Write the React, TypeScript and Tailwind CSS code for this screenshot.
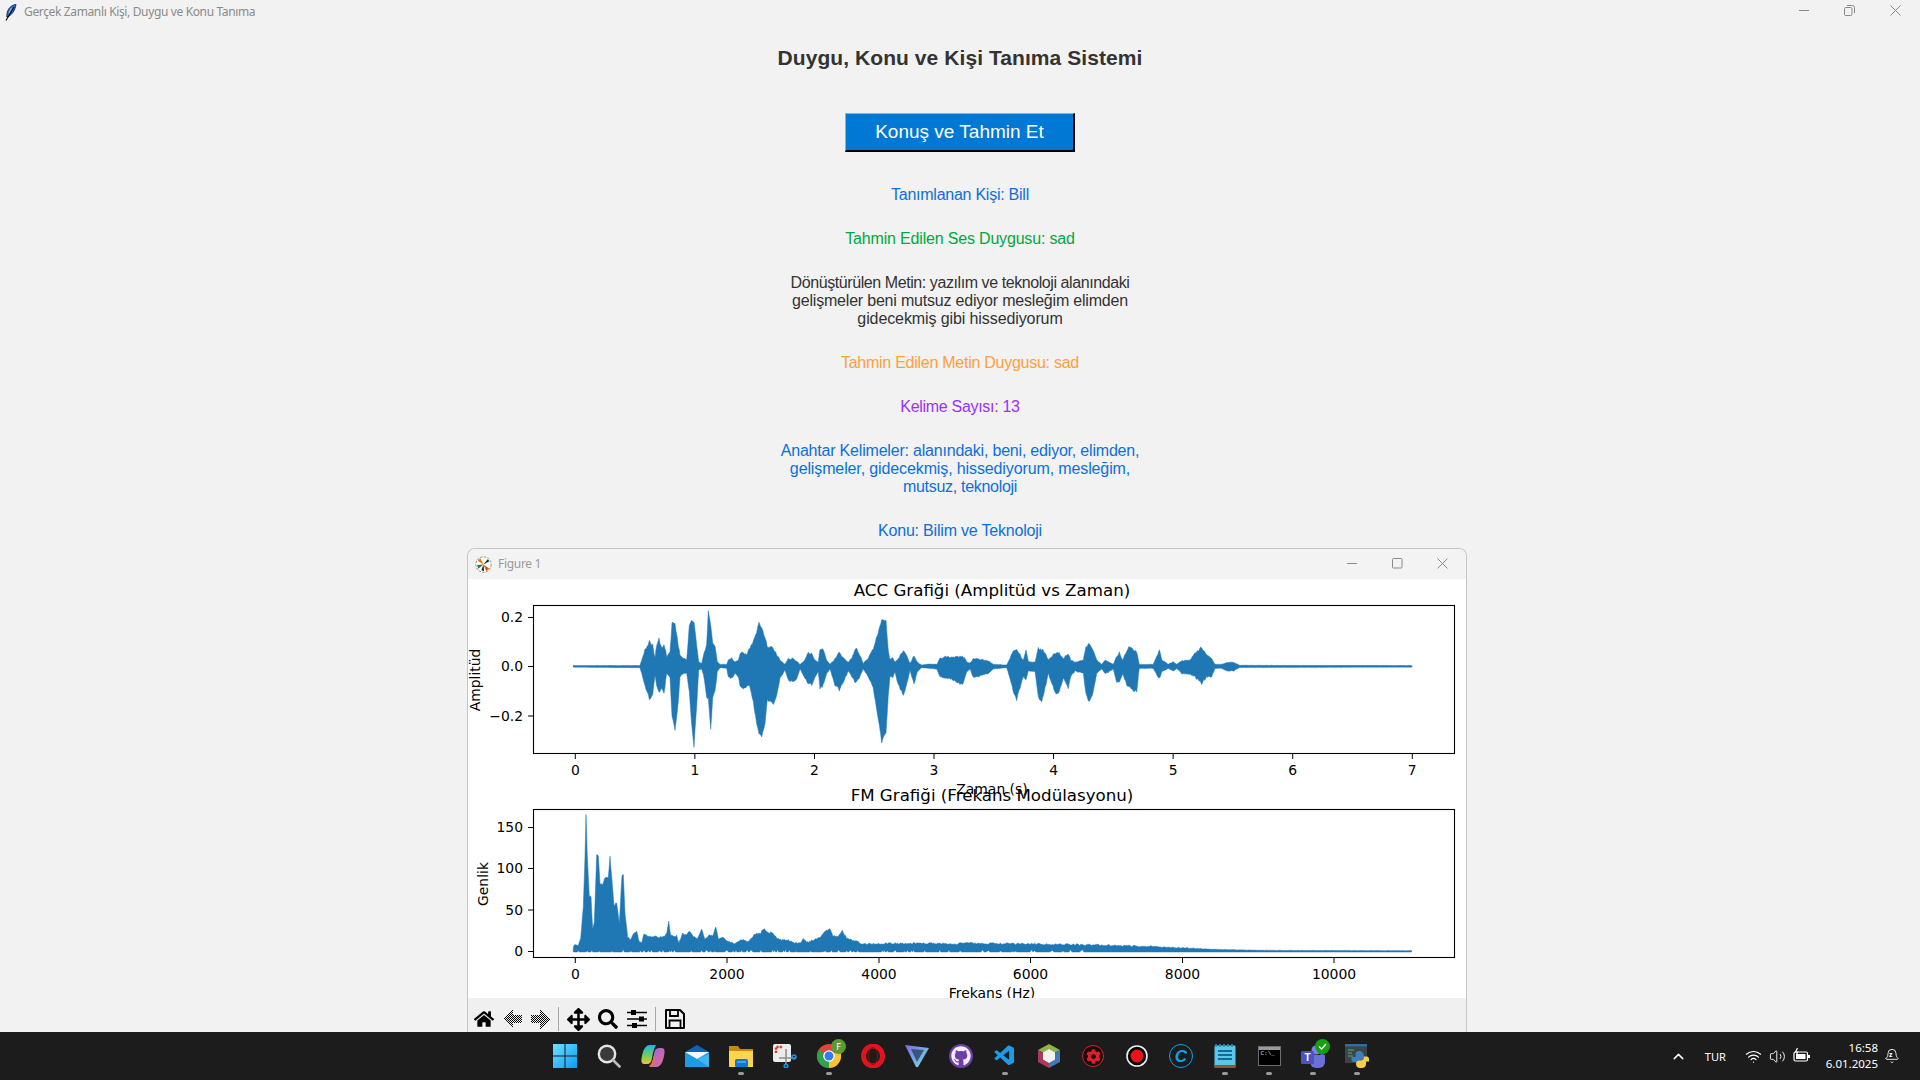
import { Bell, ChevronUp, Volume2, Wifi } from 'lucide-react';
import { FaArrowsAlt, FaCog, FaGithub, FaHome, FaSearch } from 'react-icons/fa';
import { VscVscode } from 'react-icons/vsc';

// envelope read off the reference, [x, top, bottom] in 3x crop units
const waveLeft: number[][] = [
  [340, 362, 366], [540, 362, 368], [545, 345, 385], [555, 315, 420], [568, 290, 462], [578, 300, 450], [585, 340, 390],
  [590, 300, 420], [597, 283, 440], [605, 310, 430], [612, 295, 445], [620, 335, 385], [630, 320, 400], [636, 235, 510],
  [645, 235, 557], [655, 300, 470], [660, 330, 395], [672, 340, 385], [680, 345, 385], [688, 240, 440], [695, 228, 540],
  [702, 230, 605], [710, 300, 480], [716, 350, 375], [725, 355, 372], [733, 320, 400], [740, 300, 460], [745, 198, 460],
  [752, 240, 553], [758, 295, 460], [765, 305, 440], [772, 350, 380], [780, 358, 368], [800, 358, 370], [805, 345, 395],
  [815, 340, 400], [825, 350, 385], [835, 345, 395], [840, 325, 420], [850, 322, 428], [860, 330, 425], [868, 310, 420],
  [880, 290, 470], [890, 260, 540], [897, 228, 565], [905, 250, 572], [915, 275, 540], [922, 310, 460], [930, 305, 470],
  [940, 310, 478], [950, 330, 450], [960, 345, 400], [975, 358, 375], [985, 342, 405], [1000, 340, 412], [1010, 350, 400],
  [1020, 358, 372], [1035, 345, 400], [1045, 322, 415], [1055, 325, 420], [1065, 345, 395], [1075, 352, 380], [1080, 310, 430],
  [1090, 312, 420], [1100, 345, 385], [1110, 358, 372], [1125, 340, 420], [1138, 322, 435], [1150, 340, 410], [1165, 352, 378],
  [1175, 340, 395], [1187, 308, 412], [1200, 330, 395], [1210, 355, 372], [1225, 340, 395], [1240, 310, 430], [1255, 260, 520],
  [1265, 225, 590], [1278, 228, 560], [1285, 320, 450], [1290, 345, 395], [1298, 338, 400], [1305, 350, 380], [1315, 340, 420],
  [1330, 318, 450], [1340, 330, 420], [1350, 355, 375], [1362, 332, 418], [1372, 352, 380], [1385, 360, 368], [1410, 357, 370],
  [1430, 358, 372], [1440, 340, 395], [1460, 335, 400], [1480, 335, 405],
];

const waveRight: number[][] = [
  [0, 335, 418], [10, 335, 415], [20, 350, 380], [30, 355, 372], [40, 342, 398], [60, 343, 392], [85, 348, 385], [100, 358, 372],
  [140, 360, 368], [150, 340, 400], [160, 318, 440], [170, 315, 463], [180, 330, 430], [190, 345, 395], [198, 318, 405],
  [205, 350, 378], [225, 352, 380], [235, 308, 455], [245, 315, 470], [255, 320, 430], [265, 345, 385], [285, 325, 440],
  [295, 322, 447], [310, 340, 400], [325, 325, 430], [332, 345, 395], [345, 352, 378], [370, 345, 385], [378, 305, 450],
  [388, 298, 472], [400, 320, 440], [410, 345, 385], [425, 358, 372], [435, 345, 385], [445, 350, 382], [460, 358, 372],
  [470, 335, 410], [478, 323, 415], [488, 345, 385], [500, 315, 420], [510, 303, 425], [520, 318, 435], [530, 320, 438],
  [538, 358, 370], [580, 358, 370], [590, 335, 390], [598, 315, 400], [606, 345, 380], [625, 358, 370], [640, 350, 378],
  [650, 358, 370], [665, 348, 385], [690, 345, 388], [705, 325, 395], [725, 308, 415], [740, 330, 395], [755, 342, 395],
  [765, 358, 370], [785, 358, 370], [800, 352, 378], [820, 352, 378], [840, 361, 367], [1357, 362, 366],
];

const fmTop: number[][] = [
  [340, 470], [345, 465], [355, 468], [362, 445], [370, 350], [375, 200], [378, 75], [382, 200], [388, 318], [393, 318], [398, 420],
  [403, 398], [410, 195], [415, 195], [420, 282], [428, 282], [434, 265], [438, 262], [445, 260], [450, 200], [455, 260], [462, 345],
  [470, 338], [478, 400], [486, 255], [490, 255], [495, 370], [503, 440], [510, 450], [518, 435], [530, 423], [538, 455], [545, 460],
  [552, 432], [565, 440], [580, 438], [600, 442], [612, 440], [620, 430], [626, 395], [632, 435], [640, 440], [650, 438], [657, 458],
  [668, 430], [678, 435], [688, 422], [700, 440], [712, 445], [725, 417], [735, 450], [748, 435], [758, 437], [767, 412], [775, 445],
  [790, 443], [805, 455], [825, 460], [848, 448], [865, 455], [885, 432], [900, 430], [912, 415], [925, 430], [935, 427], [950, 445],
  [965, 450], [985, 450], [1000, 458], [1020, 460], [1030, 445], [1040, 458], [1060, 450], [1080, 443], [1095, 425], [1108, 415],
  [1120, 438], [1135, 438], [1147, 422], [1160, 445], [1190, 453], [1200, 462], [1230, 463], [1300, 460], [1400, 460], [1500, 462],
];

// small repeatable noise, -0.5..0.5, so the outline does not look ruler-drawn
const noise = (i: number) => {
  const v = Math.sin(i * 12.9898) * 43758.5453;
  return v - Math.floor(v) - 0.5;
};

const wavePath = () => {
  const pts = [
    ...waveLeft.map(([x, t, b]) => [460 + x / 3, 545 + t / 3, 545 + b / 3]),
    ...waveRight.map(([x, t, b]) => [960 + x / 3, 545 + t / 3, 545 + b / 3]),
  ];
  const top: string[] = [];
  const bottom: string[] = [];
  let k = 0;
  for (let i = 0; i < pts.length - 1; i++) {
    const [x0, t0, b0] = pts[i];
    const [x1, t1, b1] = pts[i + 1];
    const steps = Math.max(1, Math.round(x1 - x0));
    for (let s = 0; s < steps; s++) {
      const f = s / steps;
      const x = x0 + (x1 - x0) * f;
      const t = t0 + (t1 - t0) * f;
      const b = b0 + (b1 - b0) * f;
      // thin stretches stay flat, loud ones get a rough edge
      const amp = Math.min(3, (b - t) / 12);
      top.push(`${x.toFixed(1)},${(t + noise(k++) * amp).toFixed(1)}`);
      bottom.push(`${x.toFixed(1)},${(b + noise(k++) * amp).toFixed(1)}`);
    }
  }
  return `M${top.join(' L')} L${bottom.reverse().join(' L')} Z`;
};

const fmPath = () => {
  const top: string[] = [];
  const bottom: string[] = [];
  let k = 1000;
  const add = (x: number, y: number, rough: number) => {
    top.push(`${x.toFixed(1)},${(y + noise(k++) * rough).toFixed(1)}`);
    const notch = x < 1100 && noise(k++) > 0.3 ? 1.5 + noise(k++) * 2 : 0;
    bottom.push(`${x.toFixed(1)},${(952 - notch).toFixed(1)}`);
  };
  for (let i = 0; i < fmTop.length - 1; i++) {
    const x0 = 460 + fmTop[i][0] / 3;
    const y0 = 790 + fmTop[i][1] / 3;
    const x1 = 460 + fmTop[i + 1][0] / 3;
    const y1 = 790 + fmTop[i + 1][1] / 3;
    const steps = Math.max(1, Math.round(x1 - x0));
    for (let s = 0; s < steps; s++) add(x0 + ((x1 - x0) * s) / steps, y0 + ((y1 - y0) * s) / steps, 1.6);
  }
  // long tail past the crop, falling off towards 9 kHz
  const tail: number[][] = [[960, 8.5], [1030, 7.5], [1100, 6.5], [1150, 5], [1183, 3.5], [1220, 2], [1260, 1.2], [1412, 0.8]];
  for (let i = 0; i < tail.length - 1; i++) {
    const [x0, h0] = tail[i];
    const [x1, h1] = tail[i + 1];
    for (let x = x0; x < x1; x += 1.5) {
      const h = h0 + ((h1 - h0) * (x - x0)) / (x1 - x0);
      add(x, 951.5 - h, h > 3 ? 1.8 : 0.3);
    }
  }
  return `M${top.join(' L')} L${bottom.reverse().join(' L')} Z`;
};

const xTicksAcc = [0, 1, 2, 3, 4, 5, 6, 7].map((n) => ({ x: 575.3 + 119.57 * n, label: String(n) }));
const xTicksFm = [
  { x: 575.3, label: '0' },
  { x: 727, label: '2000' },
  { x: 879, label: '4000' },
  { x: 1030.5, label: '6000' },
  { x: 1182.5, label: '8000' },
  { x: 1334, label: '10000' },
];
const yTicksAcc = [
  { y: 617.5, label: '0.2' },
  { y: 666.5, label: '0.0' },
  { y: 716, label: '\u22120.2' },
];
const yTicksFm = [
  { y: 827.5, label: '150' },
  { y: 868.5, label: '100' },
  { y: 910, label: '50' },
  { y: 951.5, label: '0' },
];

const Axes = ({
  top,
  xTicks,
  yTicks,
}: {
  top: number;
  xTicks: { x: number; label: string }[];
  yTicks: { y: number; label: string }[];
}) => (
  <g>
    <rect x={533.5} y={top + 0.5} width={921} height={148} fill="none" stroke="#000" strokeWidth={1.1} />
    {xTicks.map((t) => (
      <g key={t.label}>
        <line x1={t.x} x2={t.x} y1={top + 149} y2={top + 154} stroke="#000" strokeWidth={1} />
        <text x={t.x} y={top + 170} textAnchor="middle" fontSize={13.9}>
          {t.label}
        </text>
      </g>
    ))}
    {yTicks.map((t) => (
      <g key={t.label}>
        <line x1={528} x2={533} y1={t.y} y2={t.y} stroke="#000" strokeWidth={1} />
        <text x={523} y={t.y + 4.5} textAnchor="end" fontSize={13.9}>
          {t.label}
        </text>
      </g>
    ))}
  </g>
);

const FigureCanvas = () => (
  <svg
    viewBox="468 579 998 419"
    width={998}
    height={419}
    className="block"
    fontFamily="'DejaVu Sans', sans-serif"
    fill="#000"
  >
    <Axes top={605} xTicks={xTicksAcc} yTicks={yTicksAcc} />
    <Axes top={809} xTicks={xTicksFm} yTicks={yTicksFm} />
    <line x1={573.5} x2={1412.3} y1={666.5} y2={666.5} stroke="#1f77b4" strokeWidth={1.6} />
    <path d={wavePath()} fill="#1f77b4" stroke="#1f77b4" strokeWidth={0.5} strokeLinejoin="round" />
    <path d={fmPath()} fill="#1f77b4" stroke="#1f77b4" strokeWidth={0.5} strokeLinejoin="round" />
    <text x={992} y={596} textAnchor="middle" fontSize={16.67}>
      ACC Grafiği (Amplitüd vs Zaman)
    </text>
    <text x={992} y={794} textAnchor="middle" fontSize={13.9}>
      Zaman (s)
    </text>
    <text x={992} y={801} textAnchor="middle" fontSize={16.67}>
      FM Grafiği (Frekans Modülasyonu)
    </text>
    <text x={992} y={998} textAnchor="middle" fontSize={13.9}>
      Frekans (Hz)
    </text>
    <text transform="translate(480 680) rotate(-90)" textAnchor="middle" fontSize={13.9}>
      Amplitüd
    </text>
    <text transform="translate(488 884) rotate(-90)" textAnchor="middle" fontSize={13.9}>
      Genlik
    </text>
  </svg>
);

const DitherArrow = ({ dir }: { dir: 'left' | 'right' }) => {
  const id = `dither-${dir}`;
  return (
    <svg width={19} height={20} viewBox="0 0 19 20" shapeRendering="crispEdges">
      <defs>
        <pattern id={id} width={2} height={2} patternUnits="userSpaceOnUse">
          <rect width={1} height={1} fill="#000" />
          <rect x={1} y={1} width={1} height={1} fill="#000" />
        </pattern>
      </defs>
      <path
        d={dir === 'left' ? 'M0 10 L10 0 L10 6 L19 6 L19 14 L10 14 L10 20 Z' : 'M19 10 L9 0 L9 6 L0 6 L0 14 L9 14 L9 20 Z'}
        fill={`url(#${id})`}
      />
    </svg>
  );
};

const SlidersIcon = () => (
  <svg width={20} height={20} viewBox="0 0 20 20">
    <path d="M0 3.5 H20 M0 10 H20 M0 16.5 H20" stroke="#000" strokeWidth={1.6} />
    <rect x={4} y={1} width={5} height={5} fill="#000" />
    <rect x={12} y={7.5} width={5} height={5} fill="#000" />
    <rect x={5} y={14} width={5} height={5} fill="#000" />
  </svg>
);

const SaveIcon = () => (
  <svg width={20} height={20} viewBox="0 0 20 20">
    <path d="M1 1 H15 L19 5 V19 H1 Z" fill="none" stroke="#000" strokeWidth={2} strokeLinejoin="round" />
    <path d="M5 1.5 V7 H13 V1.5" fill="none" stroke="#000" strokeWidth={1.8} />
    <path d="M4.5 18.5 V11.5 H15.5 V18.5" fill="none" stroke="#000" strokeWidth={1.8} />
  </svg>
);

const ToolCell = ({ className, children }: { className?: string; children: React.ReactNode }) => (
  <div className={`flex h-[24px] w-[28px] items-center justify-center ${className ?? ''}`}>{children}</div>
);

const Toolbar = () => (
  <div className="flex h-[34px] items-start bg-[#f0f0f0] pl-[2px] pt-[9px]">
    <ToolCell>
      <FaHome size={20} color="#000" />
    </ToolCell>
    <ToolCell>
      <DitherArrow dir="left" />
    </ToolCell>
    <ToolCell>
      <DitherArrow dir="right" />
    </ToolCell>
    <div className="ml-[4px] h-[24px] w-px bg-[#a8a8a8]" />
    <ToolCell className="ml-[5px]">
      <FaArrowsAlt size={23} color="#000" />
    </ToolCell>
    <ToolCell className="ml-[2px]">
      <FaSearch size={20} color="#000" />
    </ToolCell>
    <ToolCell className="ml-px">
      <SlidersIcon />
    </ToolCell>
    <div className="ml-[4px] h-[24px] w-px bg-[#a8a8a8]" />
    <ToolCell className="ml-[5px]">
      <SaveIcon />
    </ToolCell>
  </div>
);

const MplIcon = () => (
  <svg width={17} height={17} viewBox="0 0 16 16">
    <circle cx={8} cy={8} r={7.2} fill="#fff" stroke="#777" strokeWidth={0.8} strokeDasharray="2.2 1.2" />
    <path d="M8 8 L2.5 4.5 L5 2 Z" fill="#f07800" />
    <path d="M8 8 L13.5 12 L10.5 14 Z" fill="#e05a00" />
    <path d="M8 8 L2 8.5 L3 12 Z" fill="#2c7a3a" />
    <path d="M8 8 L12 3 L13.5 5 Z" fill="#222" />
    <path d="M8 8 L8.5 14 L6 13.5 Z" fill="#222" />
  </svg>
);

const Feather = () => (
  <svg width={12} height={17} viewBox="0 0 12 17">
    <path d="M11 0.5 C6 1 2.5 5 2 10 L1.8 13 C6 12 10 7 11 0.5 Z" fill="#2f6fd0" stroke="#12264d" strokeWidth={0.9} />
    <path d="M6.5 4 L4 9" stroke="#9cc4f2" strokeWidth={1} fill="none" />
    <path d="M9 3 L1 16.5" stroke="#000" strokeWidth={1.1} fill="none" />
  </svg>
);

const WinButtons = ({ restore, className }: { restore?: boolean; className: string }) => (
  <div className={`absolute flex items-center ${className}`}>
    <svg width={11} height={11} viewBox="0 0 11 11" className="mr-[34px]">
      <line x1={0} x2={10} y1={5.5} y2={5.5} stroke="#8a8a8a" />
    </svg>
    {restore ? (
      <svg width={11} height={11} viewBox="0 0 11 11" className="mr-[35px]">
        <rect x={0.5} y={2.5} width={7.5} height={8} rx={1.2} fill="none" stroke="#8a8a8a" />
        <path d="M3 0.5 H8.5 A2 2 0 0 1 10.5 2.5 V8" fill="none" stroke="#8a8a8a" />
      </svg>
    ) : (
      <svg width={11} height={11} viewBox="0 0 11 11" className="mr-[34px]">
        <rect x={0.5} y={0.5} width={9.5} height={9.5} rx={1} fill="none" stroke="#8a8a8a" />
      </svg>
    )}
    <svg width={11} height={11} viewBox="0 0 11 11">
      <path d="M0.5 0.5 L10.5 10.5 M10.5 0.5 L0.5 10.5" stroke="#8a8a8a" fill="none" />
    </svg>
  </div>
);

const Dot = () => <span className="absolute bottom-[5px] left-1/2 h-[3px] w-[6px] -translate-x-1/2 rounded-full bg-[#9b9b9b]" />;

const TaskIcon = ({ running, children }: { running?: boolean; children: React.ReactNode }) => (
  <div className="relative flex h-[48px] w-[44px] items-center justify-center">
    {children}
    {running && <Dot />}
  </div>
);

const taskIcons: { key: string; running?: boolean; node: React.ReactNode }[] = [
  {
    key: 'start',
    node: (
      <svg width={24} height={24} viewBox="0 0 24 24">
        <defs>
          <linearGradient id="win" x1="0" y1="0" x2="1" y2="1">
            <stop offset="0" stopColor="#6fe0ff" />
            <stop offset="1" stopColor="#0a9bf5" />
          </linearGradient>
        </defs>
        <path d="M0 0 H11.5 V11.5 H0 Z M12.5 0 H24 V11.5 H12.5 Z M0 12.5 H11.5 V24 H0 Z M12.5 12.5 H24 V24 H12.5 Z" fill="url(#win)" />
      </svg>
    ),
  },
  {
    key: 'search',
    node: (
      <svg width={24} height={24} viewBox="0 0 24 24">
        <circle cx={10} cy={10} r={8.2} fill="#3a3a3a" stroke="#e4e4e4" strokeWidth={2.4} />
        <line x1={16} y1={16} x2={22.5} y2={22.5} stroke="#bdbdbd" strokeWidth={2.6} strokeLinecap="round" />
      </svg>
    ),
  },
  {
    key: 'copilot',
    node: (
      <svg width={24} height={24} viewBox="0 0 24 24">
        <defs>
          <linearGradient id="cpA" x1="0" y1="0" x2="0" y2="1">
            <stop offset="0" stopColor="#1fb6e8" />
            <stop offset="0.55" stopColor="#6bcf5a" />
            <stop offset="1" stopColor="#f6c33a" />
          </linearGradient>
          <linearGradient id="cpB" x1="0" y1="0" x2="1" y2="1">
            <stop offset="0" stopColor="#8f6be8" />
            <stop offset="1" stopColor="#f0668c" />
          </linearGradient>
        </defs>
        <path d="M9 1 H15 C13 4 12 9 11 14 C10.5 18 9 20 6 20 H3 C0 20 0 16 1 12 C2 7 4 1 9 1 Z" fill="url(#cpA)" />
        <path d="M15 23 H9 C11 20 12 15 13 10 C13.5 6 15 4 18 4 H21 C24 4 24 8 23 12 C22 17 20 23 15 23 Z" fill="url(#cpB)" />
        <path d="M8 22 C11 20 12 16 12.6 12 L14 14 C13.5 18 12 22 9 23 Z" fill="#f2762e" />
      </svg>
    ),
  },
  {
    key: 'mail',
    node: (
      <svg width={24} height={24} viewBox="0 0 24 24">
        <path d="M12 1 L24 8 V10 H0 V8 Z" fill="#0c64b8" />
        <path d="M0 8 H24 V23 H0 Z" fill="#1c9be6" />
        <path d="M0 8 H24 L12 15 Z" fill="#f4f8fc" />
        <path d="M12 15 L24 10 V23 Z" fill="#3fb6f2" />
      </svg>
    ),
  },
  {
    key: 'folder',
    running: true,
    node: (
      <svg width={24} height={24} viewBox="0 0 24 24">
        <path d="M0 2 H9 L11 5 H24 V10 H0 Z" fill="#c98a0a" />
        <path d="M0 7 H24 V23 H0 Z" fill="#fbd54e" />
        <rect x={6} y={15} width={13} height={8} rx={1.5} fill="#0f78d0" />
        <rect x={8} y={17} width={9} height={2} fill="#39a6ee" />
      </svg>
    ),
  },
  {
    key: 'snip',
    node: (
      <svg width={24} height={24} viewBox="0 0 24 24">
        <rect x={0} y={0} width={18} height={18} rx={2} fill="#ececec" />
        <path d="M3 9 V3 H10" fill="none" stroke="#d8362a" strokeWidth={2.4} strokeDasharray="2.2 1" />
        <path d="M13 5 V18 M6 14 H22 M13 18 V21" stroke="#8f8f8f" strokeWidth={1.6} />
        <circle cx={21} cy={13} r={2} fill="none" stroke="#1c92e0" strokeWidth={1.6} />
        <circle cx={13} cy={22} r={1.8} fill="none" stroke="#1c92e0" strokeWidth={1.6} />
      </svg>
    ),
  },
  {
    key: 'chrome',
    running: true,
    node: (
      <div className="relative h-[24px] w-[24px]">
        <svg width={24} height={24} viewBox="0 0 24 24">
          <circle cx={12} cy={12} r={12} fill="#e0453a" />
          <path d="M12 12 L1.6 6 A12 12 0 0 0 12 24 Z" fill="#2fa14f" />
          <path d="M12 12 L12 24 A12 12 0 0 0 22.4 6 Z" fill="#f8c52e" />
          <circle cx={12} cy={12} r={5.8} fill="#fff" />
          <circle cx={12} cy={12} r={4.5} fill="#2f7df0" />
        </svg>
        <span className="absolute left-[14px] top-[-5px] flex h-[15px] w-[15px] items-center justify-center rounded-full bg-[#5d9a35] font-['Noto_Sans',sans-serif] text-[9px] leading-none text-white">
          F
        </span>
      </div>
    ),
  },
  {
    key: 'opera',
    node: (
      <svg width={24} height={24} viewBox="0 0 24 24">
        <ellipse cx={12} cy={12} rx={9.5} ry={10} fill="none" stroke="#e0141f" strokeWidth={5} />
        <ellipse cx={12} cy={12} rx={4.5} ry={8.5} fill="none" stroke="#8e0d14" strokeWidth={1} />
      </svg>
    ),
  },
  {
    key: 'vee',
    node: (
      <svg width={24} height={24} viewBox="0 0 24 24">
        <defs>
          <linearGradient id="vee" x1="0" y1="0" x2="1" y2="1">
            <stop offset="0" stopColor="#7d6be8" />
            <stop offset="1" stopColor="#6fe8e0" />
          </linearGradient>
        </defs>
        <path d="M0 1 L24 4 L13 23 Q11.5 24 10.5 22 Z" fill="url(#vee)" />
        <path d="M6 5 L12 18 L19 6 Z" fill="#2a3a5c" opacity={0.75} />
      </svg>
    ),
  },
  {
    key: 'github',
    node: (
      <div className="flex h-[24px] w-[24px] items-center justify-center rounded-full bg-[#6e3fa8]">
        <FaGithub size={20} color="#f3eefa" />
      </div>
    ),
  },
  {
    key: 'vscode',
    running: true,
    node: <VscVscode size={24} color="#1c9be6" />,
  },
  {
    key: 'cube',
    node: (
      <svg width={24} height={24} viewBox="0 0 24 24">
        <path d="M12 0 L23 6 L12 12 L1 6 Z" fill="#8fb34a" />
        <path d="M1 6 L12 12 V24 L1 18 Z" fill="#a83a5c" />
        <path d="M23 6 L12 12 V24 L23 18 Z" fill="#3f79b8" />
        <path d="M12 5 L18 8.5 V15.5 L12 19 L6 15.5 V8.5 Z" fill="#f2f2f2" />
      </svg>
    ),
  },
  {
    key: 'booster',
    node: (
      <div className="flex h-[22px] w-[22px] items-center justify-center rounded-full border border-[#d8232a] bg-[#1a0a0a]">
        <FaCog size={15} color="#d8232a" />
      </div>
    ),
  },
  {
    key: 'record',
    node: (
      <svg width={22} height={22} viewBox="0 0 22 22">
        <circle cx={11} cy={11} r={10} fill="#000" stroke="#f0f0f0" strokeWidth={1.6} />
        <circle cx={11} cy={11} r={6.5} fill="#e8141c" />
      </svg>
    ),
  },
  {
    key: 'ccleaner',
    node: (
      <div className="flex h-[24px] w-[24px] items-center justify-center rounded-full border-[1.5px] border-[#12a0ea] font-['Liberation_Sans',sans-serif] text-[17px] font-bold italic leading-none text-[#12a0ea]">
        C
      </div>
    ),
  },
  {
    key: 'notepad',
    running: true,
    node: (
      <svg width={22} height={24} viewBox="0 0 22 24">
        <rect x={0.5} y={1.5} width={21} height={22} rx={1} fill="#5cc6e8" />
        <rect x={0.5} y={21} width={21} height={3} fill="#8a5a2a" />
        <path d="M2 0 V3 M6 0 V3 M10 0 V3 M14 0 V3 M18 0 V3" stroke="#2a8fc0" strokeWidth={1.6} />
        <path d="M4 7 H18 M4 11 H18 M4 15 H18" stroke="#136a96" strokeWidth={2} />
      </svg>
    ),
  },
  {
    key: 'cmd',
    running: true,
    node: (
      <div className="h-[20px] w-[23px] border border-[#6e6e6e] bg-black">
        <div className="h-[3px] bg-[#9a9a9a]" />
        <div className="pl-[2px] pt-px font-['Liberation_Mono',monospace] text-[6px] leading-none text-[#dddddd]">C:\_</div>
      </div>
    ),
  },
  {
    key: 'teams',
    running: true,
    node: (
      <div className="relative h-[24px] w-[24px]">
        <svg width={24} height={24} viewBox="0 0 24 24">
          <circle cx={15} cy={6} r={4.5} fill="#7b83eb" />
          <circle cx={21} cy={8} r={3} fill="#5059c9" />
          <path d="M9 11 H24 V18 A6 6 0 0 1 18 24 H15 A6 6 0 0 1 9 18 Z" fill="#6a70d8" />
          <rect x={0} y={7} width={13} height={13} rx={1.5} fill="#4b53bc" />
        </svg>
        <span className="absolute left-[2px] top-[8px] w-[9px] text-center font-['Liberation_Sans',sans-serif] text-[10px] font-bold leading-[11px] text-white">
          T
        </span>
        <svg width={15} height={15} viewBox="0 0 15 15" className="absolute left-[14px] top-[-5px]">
          <circle cx={7.5} cy={7.5} r={7.5} fill="#13a10e" />
          <path d="M4 7.5 L6.6 10 L11 5" fill="none" stroke="#fff" strokeWidth={1.3} />
        </svg>
      </div>
    ),
  },
  {
    key: 'python',
    running: true,
    node: (
      <svg width={24} height={24} viewBox="0 0 24 24">
        <rect x={0} y={0} width={22} height={19} fill="#3b4548" />
        <rect x={0} y={0} width={22} height={2.5} fill="#2c6ea6" />
        <path d="M3 6 H9 M3 9 H7 M3 12 H8" stroke="#5fa86a" strokeWidth={1.2} />
        <path d="M15 7 C11 7 10.5 9 10.5 10.5 V13 H6.5 V16 C6.5 17.5 8 18 9 18 H15 V16 H12 C13.5 16 17.5 16 18.5 15 C19.5 14 19.5 8 15 7 Z" fill="#3d7fbd" />
        <path d="M16 24 C20 24 21 22 21 20 V17.5 H24 V15 C24 13 22.5 12.5 21 12.5 H19 C19 15 18 16.5 15 16.5 C12.5 16.5 11 17.5 11 19.5 C11 22 12 24 16 24 Z" fill="#f5cf4a" />
      </svg>
    ),
  },
];

const BatteryIcon = () => (
  <svg width={18} height={16} viewBox="0 0 18 16">
    <rect x={1} y={4} width={13.5} height={9} rx={1.5} fill="none" stroke="#fff" strokeWidth={1.2} />
    <rect x={3} y={6} width={9.5} height={5} fill="#fff" />
    <rect x={15} y={7} width={2} height={3} fill="#fff" />
    <path d="M4.5 0 L2.5 4 H4.5 L3.5 7" fill="none" stroke="#fff" strokeWidth={1.2} />
  </svg>
);

const Tray = () => (
  <div className="flex h-full flex-1 items-center justify-end font-['Noto_Sans',sans-serif] text-white">
    <ChevronUp size={17} strokeWidth={2} className="mr-[18px]" />
    <span className="mr-[19px] text-[11px] leading-none">TUR</span>
    <Wifi size={17} strokeWidth={1.6} className="mr-[7px]" />
    <Volume2 size={17} strokeWidth={1.3} className="mr-[7px]" />
    <BatteryIcon />
    <div className="ml-[15px] mr-[7px] flex flex-col items-end text-[11.5px] leading-[16px]">
      <span>16:58</span>
      <span>6.01.2025</span>
    </div>
    <div className="relative mr-[20px] -ml-px">
      <Bell size={16} strokeWidth={1.3} />
      <span className="absolute left-[5px] top-[3px] text-[7px] font-bold leading-none">z</span>
    </div>
  </div>
);

const blue = 'text-[#0b6fe0]';

const App = () => {
  return (
    <div className="relative flex h-screen w-screen flex-col overflow-hidden bg-[#f2f2f2] font-['Liberation_Sans',Arial,sans-serif]">
      <header className="relative flex h-[24px] shrink-0 items-center pl-[5px]">
        <Feather />
        <span className="ml-[7px] font-['Noto_Sans',sans-serif] text-[12px] leading-none tracking-[-0.36px] text-[#8a8a8a]">
          Gerçek Zamanlı Kişi, Duygu ve Konu Tanıma
        </span>
        <WinButtons restore className="right-[19px] top-[5px]" />
      </header>

      <main className="flex flex-1 flex-col items-center pt-[22px] text-center text-[16px] leading-[18px]">
        <h1 className="text-[21px] font-bold leading-[24px] tracking-[0.07px] text-[#333333]">
          Duygu, Konu ve Kişi Tanıma Sistemi
        </h1>
        <button className="mb-[34px] mt-[43px] h-[39px] w-[230px] border-b-2 border-l border-r-2 border-t border-b-black border-l-[#7ab8ee] border-r-black border-t-[#7ab8ee] bg-[#0078d4] text-[19px] text-white">
          Konuş ve Tahmin Et
        </button>
        <div className="flex flex-col gap-[26px]">
          <p className={`${blue} tracking-[-0.25px]`}>Tanımlanan Kişi: Bill</p>
          <p className="tracking-[-0.18px] text-[#00a83e]">Tahmin Edilen Ses Duygusu: sad</p>
          <p className="text-[#333333]">
            <span className="tracking-[-0.42px]">Dönüştürülen Metin: yazılım ve teknoloji alanındaki</span>
            <br />
            <span className="tracking-[-0.2px]">gelişmeler beni mutsuz ediyor mesleğim elimden</span>
            <br />
            <span className="tracking-[-0.1px]">gidecekmiş gibi hissediyorum</span>
          </p>
          <p className="tracking-[-0.26px] text-[#ff9f3a]">Tahmin Edilen Metin Duygusu: sad</p>
          <p className="tracking-[-0.3px] text-[#9b30ff]">Kelime Sayısı: 13</p>
          <p className={blue}>
            <span className="tracking-[-0.2px]">Anahtar Kelimeler: alanındaki, beni, ediyor, elimden,</span>
            <br />
            <span className="tracking-[-0.12px]">gelişmeler, gidecekmiş, hissediyorum, mesleğim,</span>
            <br />
            <span className="tracking-[-0.3px]">mutsuz, teknoloji</span>
          </p>
          <p className={`${blue} tracking-[-0.2px]`}>Konu: Bilim ve Teknoloji</p>
        </div>
      </main>

      {/* matplotlib window sitting on top of the tk window, cut off by the taskbar */}
      <section className="absolute left-[467px] top-[548px] w-[1000px] rounded-t-lg border border-b-0 border-[#c6c6c6] bg-white">
        <div className="relative flex h-[30px] items-center rounded-t-lg bg-[#f3f3f3] pl-[7px]">
          <MplIcon />
          <span className="ml-[6px] font-['Noto_Sans',sans-serif] text-[12px] leading-none tracking-[-0.3px] text-[#9a9a9a]">Figure 1</span>
          <WinButtons className="right-[18px] top-[9px]" />
        </div>
        <FigureCanvas />
        <Toolbar />
      </section>

      <footer className="relative z-10 flex h-[48px] shrink-0 items-center bg-[#1c1c1c]">
        <div className="flex-1" />
        <div className="ml-[2px] flex">
          {taskIcons.map((t) => (
            <TaskIcon key={t.key} running={t.running}>
              {t.node}
            </TaskIcon>
          ))}
        </div>
        <Tray />
      </footer>
    </div>
  );
};

export default App;
